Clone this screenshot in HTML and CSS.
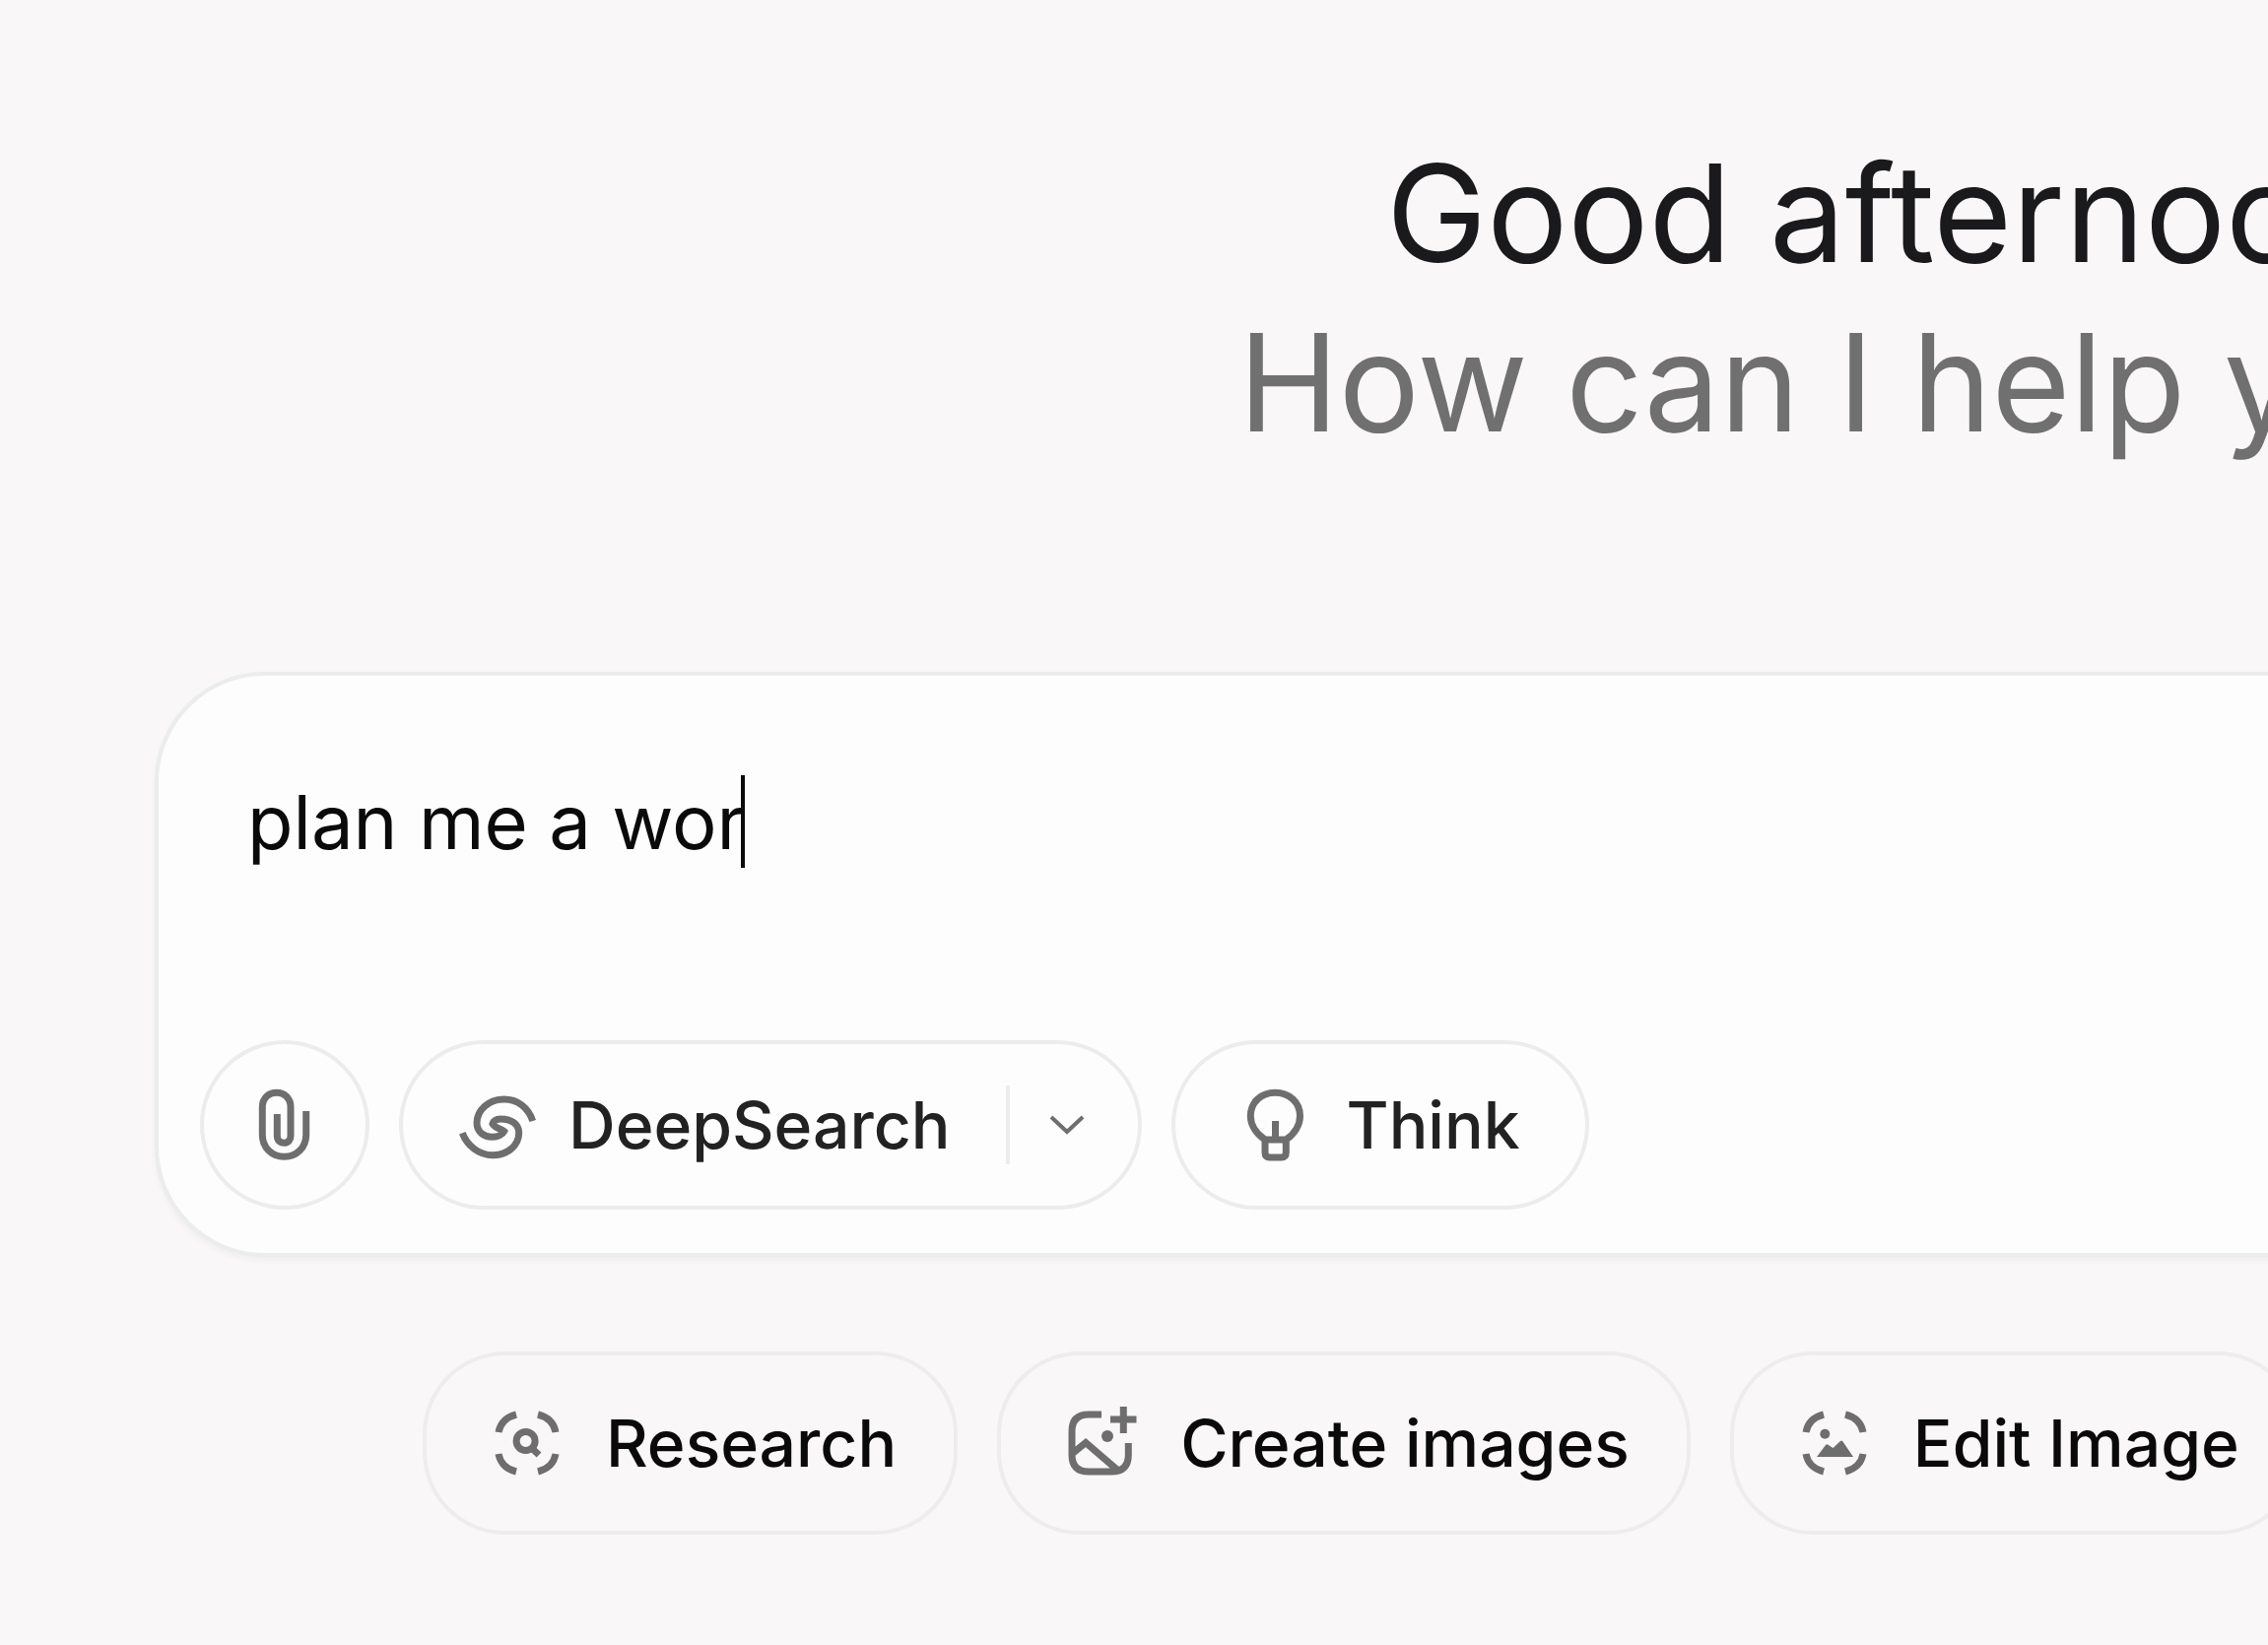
FILE: index.html
```html
<!DOCTYPE html>
<html lang="en">
<head>
    <meta charset="UTF-8">
    <meta name="viewport" content="width=device-width, initial-scale=1.0">
    <title>New chat</title>
    <link rel="stylesheet" href="styles.css">
</head>
<body>
    <main class="home">
        <h1 class="greeting">
            <span class="greeting-name">Good afternoon</span>
            <span class="greeting-question">How can I help you</span>
        </h1>

        <form class="composer">
            <div class="prompt">
                <input class="prompt-input" type="text" value="plan me a wor" aria-label="Ask anything">
                <span class="caret"></span>
            </div>
            <div class="tools">
                <button class="tool tool-attach" type="button" aria-label="Attach">
                    <svg class="icon" viewBox="0 0 80 80">
                        <path d="M61.700 26V50C61.700 63 52 72.300 39.500 72.300S17.300 63 17.300 50V22C17.300 13 23.500 7.300 31.700 7.300S46 13 46 22V51C46 55.500 43.500 58.300 39.300 58.300S32.300 55.500 32.300 51V29"/>
                    </svg>
                </button>
                <div class="tool tool-group">
                    <button class="tool-main" type="button">
                        <svg class="icon" viewBox="0 0 80 80">
                            <path d="M75.700 36C71 22 60 14 46.700 14C31 14 19 25 19 38C19 47 26 52.300 35 52.300C40 52.300 45 50 46.700 46.500C43 43 38 44 35 39C36 35.500 39 34 43 34C54 34 61.700 39 61.700 48C61.700 61 50 70.700 35 70.700C21 70.700 9 61 4.300 48.300"/>
                        </svg>
                        DeepSearch
                    </button>
                    <button class="tool-more" type="button" aria-label="DeepSearch options">
                        <svg class="chevron" viewBox="0 0 40 24">
                            <path d="M4 4L20 19L36 4"/>
                        </svg>
                    </button>
                </div>
                <button class="tool tool-think" type="button">
                    <svg class="icon" viewBox="0 0 80 80">
                        <path d="M29 55C20 49 14.300 40 14.300 31C14.300 17 25 7.300 39.300 7.300S64.500 17 64.500 31C64.500 40 59 49 50.300 55M29 55H50.300V68Q50.300 73 45.300 73H34Q29 73 29 68ZM39.500 36V55"/>
                    </svg>
                    Think
                </button>
            </div>
        </form>

        <div class="suggestions">
            <button class="suggestion" type="button">
                <svg class="icon" viewBox="0 0 80 80">
                    <path d="M11 29Q13.500 15 29 11M51 11Q66.500 15 69 29M11 51Q13.500 65 29 69M51 69Q66.500 65 69 51M44.500 45L52 52"/>
                    <circle cx="38.600" cy="38" r="9.500"/>
                </svg>
                Research
            </button>
            <button class="suggestion" type="button">
                <svg class="icon" viewBox="0 0 80 80">
                    <path d="M40 11H27Q10 11 10 28V52Q10 69 27 69H50Q67.300 69 67.300 52V40M10 51L24 39.500L57 68M62.300 3V30M49 16H75.500"/>
                    <circle class="fill" cx="46" cy="33" r="6"/>
                </svg>
                Create images
            </button>
            <button class="suggestion" type="button">
                <svg class="icon" viewBox="0 0 80 80">
                    <path d="M11 29Q13.500 15 29 11M51 11Q66.500 15 69 29M11 51Q13.500 65 29 69M51 69Q66.500 65 69 51"/>
                    <circle class="fill" cx="30.300" cy="30.700" r="5"/>
                    <path class="fill" d="M22 54L31 42Q32 40.500 33.500 41.700L38.500 45L46 38Q47.300 37 48.500 38.500L59 54Z"/>
                </svg>
                Edit Image
            </button>
        </div>
    </main>
</body>
</html>
```

FILE: styles.css
```css
* {
    box-sizing: border-box;
}
body {
    margin: 0;
    background: #f9f7f8;
    color: #0a0a0a;
    font-family: Inter, "Liberation Sans", sans-serif;
}
button,
input {
    margin: 0;
    padding: 0;
    border: none;
    background: transparent;
    color: inherit;
    font: inherit;
}
button {
    cursor: pointer;
}
/* the row runs wider than the window and is cut at its right edge */
.home {
    min-height: 100vh;
    padding: 130px 0 0 157px;
    overflow: hidden;
}
.greeting {
    display: flex;
    flex-direction: column;
    margin: 0 0 208px;
    font-size: 137px;
    font-weight: 400;
    line-height: 172px;
    white-space: nowrap;
}
.greeting-name {
    margin-left: 1250px;
    color: #1a191b;
}
.greeting-question {
    margin-left: 1100px;
    color: #717071;
}
.composer {
    margin-right: -160px;
    padding: 92px 44px 44px 42px;
    border: 4px solid #ebecec;
    border-radius: 112px;
    background: #fdfdfd;
    box-shadow: 0 4px 6px rgba(0, 0, 0, 0.04);
}
.prompt {
    display: flex;
    align-items: center;
    height: 112px;
    margin-bottom: 166px;
    padding-left: 48px;
}
.prompt-input {
    field-sizing: content;
    font-size: 76px;
    line-height: 112px;
    outline: none;
}
.caret {
    width: 4px;
    height: 94px;
    margin-left: -4px;
    background: #0a0a0a;
}
.tools {
    display: flex;
    gap: 30px;
    color: #222222;
    font-size: 66px;
    font-weight: 500;
}
.tool {
    display: flex;
    align-items: center;
    height: 172px;
    border: 4px solid #ececec;
    border-radius: 86px;
}
.tool-attach {
    justify-content: center;
    width: 172px;
}
.tool-main {
    display: flex;
    align-items: center;
    gap: 32px;
    padding: 0 56px;
}
.tool-more {
    display: flex;
    align-items: center;
    height: 80px;
    padding: 0 52px 0 38px;
    border-left: 4px solid #ececec;
}
.tool-think {
    gap: 32px;
    padding: 0 66px 0 62px;
}
.icon {
    flex: none;
    width: 80px;
    height: 80px;
    fill: none;
    stroke: #6e6e6e;
    stroke-width: 7;
}
.icon .fill {
    fill: #6e6e6e;
    stroke: none;
}
.chevron {
    width: 40px;
    height: 24px;
    fill: none;
    stroke: #6e6e6e;
    stroke-width: 4;
}
.suggestions {
    display: flex;
    gap: 40px;
    margin-top: 96px;
    padding-left: 272px;
    font-size: 66px;
    font-weight: 500;
}
.suggestion {
    display: flex;
    flex: none;
    align-items: center;
    gap: 40px;
    height: 186px;
    padding: 0 58px 0 62px;
    border: 4px solid #eeedee;
    border-radius: 84px;
    white-space: nowrap;
}
```
